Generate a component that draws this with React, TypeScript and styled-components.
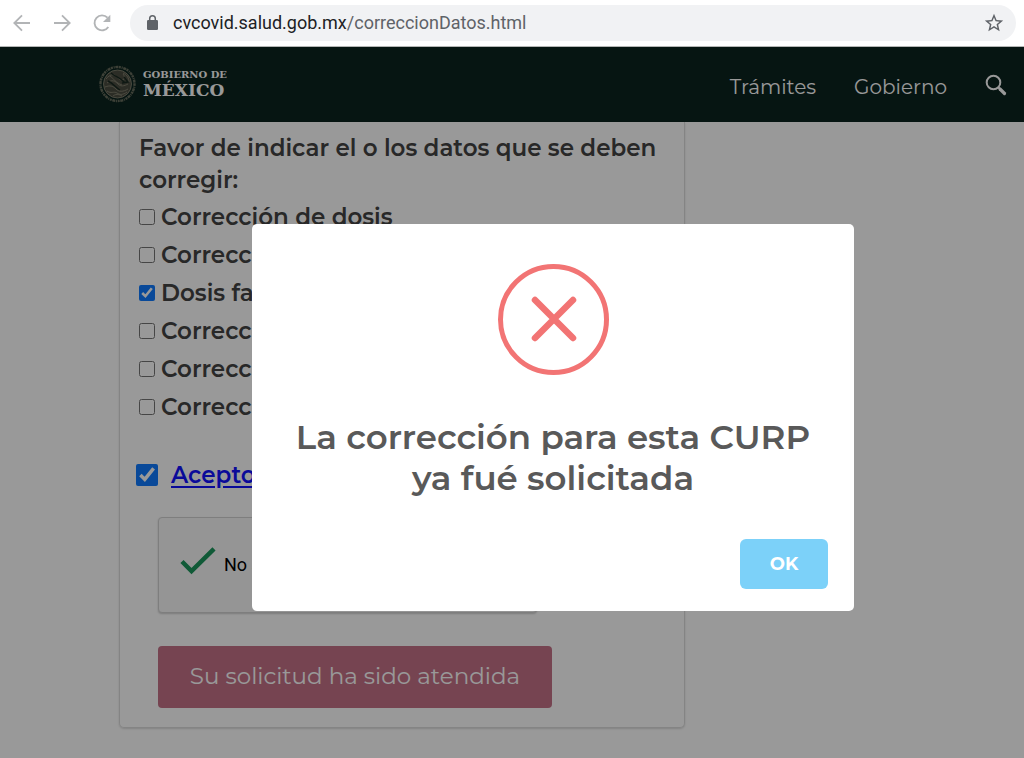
import React from "react";
import styled, { createGlobalStyle } from "styled-components";

const GlobalStyle = createGlobalStyle`
  * { box-sizing: border-box; }
  html, body, #root { height: 100%; }
  body {
    margin: 0;
    overflow: hidden;
    background: #fff;
    color: #434343;
    font-family: Montserrat, Inter, sans-serif;
  }
`;

const Window = styled.div`
  display: flex;
  flex-direction: column;
  min-height: 100%;
`;

const BrowserBar = styled.div`
  display: flex;
  align-items: center;
  height: 47px;
  padding: 0 8px 0 10px;
  background: #fff;
  border-bottom: 1px solid #b4b6b5;
`;

const BrowserButton = styled.button`
  display: flex;
  padding: 0;
  margin-right: 16px;
  border: 0;
  background: none;
  color: #b2b4b6;
`;

const AddressBar = styled.div`
  flex: 1;
  display: flex;
  align-items: center;
  height: 36px;
  padding: 0 11px 0 15px;
  border-radius: 18px;
  background: #f1f2f4;
  color: #5f6368;
  font: 18px/24px Roboto, sans-serif;
`;

const Address = styled.span`
  flex: 1;
  padding-left: 13px;
`;

const Host = styled.span`
  color: #202124;
`;

const StarButton = styled(BrowserButton)`
  margin: 0;
  color: #5f6368;
`;

const Site = styled.div`
  position: relative;
  flex: 1;
`;

const Header = styled.header`
  display: flex;
  align-items: center;
  justify-content: space-between;
  height: 75px;
  padding: 0 17px 0 99px;
  background: #0b231e;
`;

const Brand = styled.a`
  display: flex;
  align-items: center;
  gap: 7px;
  padding-bottom: 2px;
  color: #fff;
  text-decoration: none;
  font-family: "DejaVu Serif", serif;
  font-weight: 700;
`;

const BrandName = styled.span`
  display: flex;
  flex-direction: column;
`;

const BrandTop = styled.span`
  font-size: 10px;
  line-height: 12px;
`;

const BrandMain = styled.span`
  font-size: 17px;
  line-height: 18px;
`;

const Nav = styled.nav`
  display: flex;
  align-items: center;
  gap: 38px;
  padding-top: 5px;
`;

const NavLink = styled.a`
  color: #fff;
  font-size: 20px;
  line-height: 24px;
  text-decoration: none;
`;

const SearchButton = styled.button`
  display: flex;
  padding: 0 0 4px;
  border: 0;
  background: none;
  color: #fff;
`;

const Card = styled.form`
  width: 566px;
  max-width: calc(100% - 119px);
  margin-left: 119px;
  padding: 10px 19px 19px;
  border: 1px solid #dcdcdc;
  border-top: 0;
  border-radius: 0 0 5px 5px;
  box-shadow: 0 1px 2px rgba(0, 0, 0, 0.15);
`;

const Fields = styled.fieldset`
  display: flex;
  flex-direction: column;
  gap: 6px;
  margin: 0;
  padding: 0;
  border: 0;
  font-size: 23px;
  font-weight: 600;
  line-height: 32px;
`;

const Legend = styled.legend`
  padding: 0 0 5px;
`;

const Option = styled.label`
  display: flex;
  align-items: center;
  gap: 6px;
`;

const Check = styled.input<{ $size: number }>`
  width: ${(p) => p.$size}px;
  height: ${(p) => p.$size}px;
  margin: 0;
  accent-color: #0f7bff;
`;

const Terms = styled.div`
  display: flex;
  align-items: center;
  gap: 13px;
  margin: 36px 0 26px -3px;
  font-size: 23px;
  font-weight: 600;
  line-height: 32px;
`;

const TermsLink = styled.a`
  color: #1212ff;
  text-underline-offset: 3px;
`;

const Captcha = styled.div`
  display: flex;
  align-items: center;
  gap: 7px;
  width: 379px;
  height: 96px;
  margin: 0 0 33px 19px;
  padding-left: 21px;
  border: 1px solid #d3d3d3;
  border-radius: 4px;
  background: #f9f9f9;
  box-shadow: 0 1px 2px rgba(0, 0, 0, 0.2);
  color: #000;
  font: 18px/24px Roboto, sans-serif;
`;

const CaptchaText = styled.span`
  padding-bottom: 1px;
  word-break: keep-all;
`;

const Submit = styled.button`
  display: block;
  width: 394px;
  height: 62px;
  margin-left: 19px;
  padding-bottom: 3px;
  border: 0;
  border-radius: 4px;
  background: #c57288;
  color: #fff;
  font-family: inherit;
  font-size: 23px;
  line-height: 32px;
`;

const Overlay = styled.div`
  position: absolute;
  inset: 0;
  padding: 177px 0 0 82px;
  background: rgba(0, 0, 0, 0.4);
`;

const Modal = styled.section`
  display: flex;
  flex-direction: column;
  align-items: center;
  width: 602px;
  max-width: 100%;
  margin: 0 auto;
  padding: 40px 26px 22px;
  border-radius: 5px;
  background: #fff;
`;

const ModalTitle = styled.h2`
  margin: 42px 0 40px;
  color: #595959;
  font-size: 34px;
  font-weight: 600;
  line-height: 41px;
  text-align: center;
`;

const OkButton = styled.button`
  align-self: flex-end;
  width: 88px;
  height: 50px;
  border: 0;
  border-radius: 6px;
  background: #7cd1f9;
  color: #fff;
  font-family: inherit;
  font-size: 18px;
  font-weight: 700;
`;

const options = [
  { text: "Corrección de dosis", checked: false },
  { text: "Corrección", checked: false },
  { text: "Dosis faltante", checked: true },
  { text: "Corrección", checked: false },
  { text: "Corrección", checked: false },
  { text: "Corrección", checked: false },
];

const Arrow = ({ back }: { back?: boolean }) => (
  <svg width="24" height="24" viewBox="0 0 24 24" fill="none" stroke="currentColor" strokeWidth="1.8">
    {back ? <path d="M20 12H4.500M12 4.300 4.300 12l7.700 7.700" /> : <path d="M4 12h15.500M12 4.300l7.700 7.700-7.700 7.700" />}
  </svg>
);

const Reload = () => (
  <svg width="24" height="24" viewBox="0 0 24 24">
    <path d="M18.300 16a7.500 7.500 0 1 1-.8-9.300" fill="none" stroke="currentColor" strokeWidth="1.900" />
    <path d="M20.300 3.700v7.300h-7.300z" fill="currentColor" />
  </svg>
);

const Lock = () => (
  <svg width="15" height="18" viewBox="0 0 15 18">
    <rect x="2" y="6" width="11" height="10" rx="1.300" fill="currentColor" />
    <path d="M4.700 6.500V4.500a2.800 2.800 0 0 1 5.600 0v2" fill="none" stroke="currentColor" strokeWidth="1.500" />
  </svg>
);

const Star = () => (
  <svg width="22" height="22" viewBox="0 0 24 24" fill="currentColor">
    <path d="m22 9.240-7.190-.62L12 2 9.190 8.630 2 9.240l5.460 4.730L5.820 21 12 17.270 18.180 21l-1.630-7.030zM12 15.400l-3.760 2.270 1-4.280-3.320-2.880 4.380-.38L12 6.100l1.710 4.040 4.380.38-3.320 2.880 1 4.280z" />
  </svg>
);

const Seal = () => (
  <svg width="37" height="38" viewBox="0 0 37 38" fill="none" stroke="#8d8b78">
    <circle cx="18.500" cy="19" r="17" strokeWidth="2.400" strokeDasharray="2 .8 1 .7 3 .6" opacity=".7" />
    <circle cx="18.500" cy="19" r="14" fill="#4a4c40" strokeWidth=".8" />
    <path d="M7 14c4-5 8-5 10-3s3 4 6 4 3-4 1-6M8 18c5-4 8-2 11 1s6 2 10 0M6 22c5-2 8-1 11 2s7 3 12 0M8 26c4 3 7 0 10 2s6 2 10-1M14 31c2-2 6-2 9 0M11 11c3 2 6 7 12 9M24 8c4 2 6 5 6 9" strokeWidth="1" opacity=".8" />
    <path d="M12 8c4 4 9 4 14 10M9 16c5 2 7 6 12 9M25 12l4 5-6 1" stroke="#182820" strokeWidth="1.400" />
  </svg>
);

const Search = () => (
  <svg width="22" height="22" viewBox="0 0 22 22" fill="none" stroke="currentColor">
    <circle cx="8.500" cy="8.500" r="6.800" strokeWidth="2" />
    <path d="m13.500 13.500 1.500 1.500" strokeWidth="2" />
    <path d="m15 15 4.500 4.500" strokeWidth="3.200" strokeLinecap="round" />
  </svg>
);

const GreenCheck = () => (
  <svg width="37" height="38" viewBox="0 0 37 38" fill="none">
    <path d="m2 15.500 9.500 9.500L34 2.800" stroke="#1c965c" strokeWidth="4.500" />
  </svg>
);

const ErrorIcon = () => (
  <svg width="111" height="111" viewBox="0 0 111 111" fill="none" stroke="#f27474">
    <circle cx="55.500" cy="55.500" r="53" strokeWidth="5" />
    <path d="m37 36 38 38M75 36 37 74" strokeWidth="6.500" strokeLinecap="round" />
  </svg>
);

export default function App() {
  return (
    <Window>
      <GlobalStyle />
      <BrowserBar>
        <BrowserButton aria-label="Atrás"><Arrow back /></BrowserButton>
        <BrowserButton aria-label="Adelante"><Arrow /></BrowserButton>
        <BrowserButton aria-label="Recargar"><Reload /></BrowserButton>
        <AddressBar>
          <Lock />
          <Address><Host>cvcovid.salud.gob.mx</Host>/correccionDatos.html</Address>
          <StarButton aria-label="Favorito"><Star /></StarButton>
        </AddressBar>
      </BrowserBar>
      <Site>
        <Header>
          <Brand href="#">
            <Seal />
            <BrandName>
              <BrandTop>GOBIERNO DE</BrandTop>
              <BrandMain>MÉXICO</BrandMain>
            </BrandName>
          </Brand>
          <Nav>
            <NavLink href="#">Trámites</NavLink>
            <NavLink href="#">Gobierno</NavLink>
            <SearchButton aria-label="Buscar"><Search /></SearchButton>
          </Nav>
        </Header>
        <Card>
          <Fields>
            <Legend>Favor de indicar el o los datos que se deben corregir:</Legend>
            {options.map((o, i) => (
              <Option key={i}>
                <Check type="checkbox" $size={16} defaultChecked={o.checked} />
                {o.text}
              </Option>
            ))}
          </Fields>
          <Terms>
            <Check type="checkbox" $size={22} defaultChecked aria-labelledby="terms-link" />
            <TermsLink id="terms-link" href="#">Acepto los</TermsLink>
          </Terms>
          <Captcha>
            <GreenCheck />
            <CaptchaText>No soy un robot</CaptchaText>
          </Captcha>
          <Submit type="button">Su solicitud ha sido atendida</Submit>
        </Card>
        <Overlay>
          <Modal role="dialog" aria-modal="true" aria-labelledby="modal-title">
            <ErrorIcon />
            <ModalTitle id="modal-title">La corrección para esta CURP ya fué solicitada</ModalTitle>
            <OkButton type="button">OK</OkButton>
          </Modal>
        </Overlay>
      </Site>
    </Window>
  );
}
